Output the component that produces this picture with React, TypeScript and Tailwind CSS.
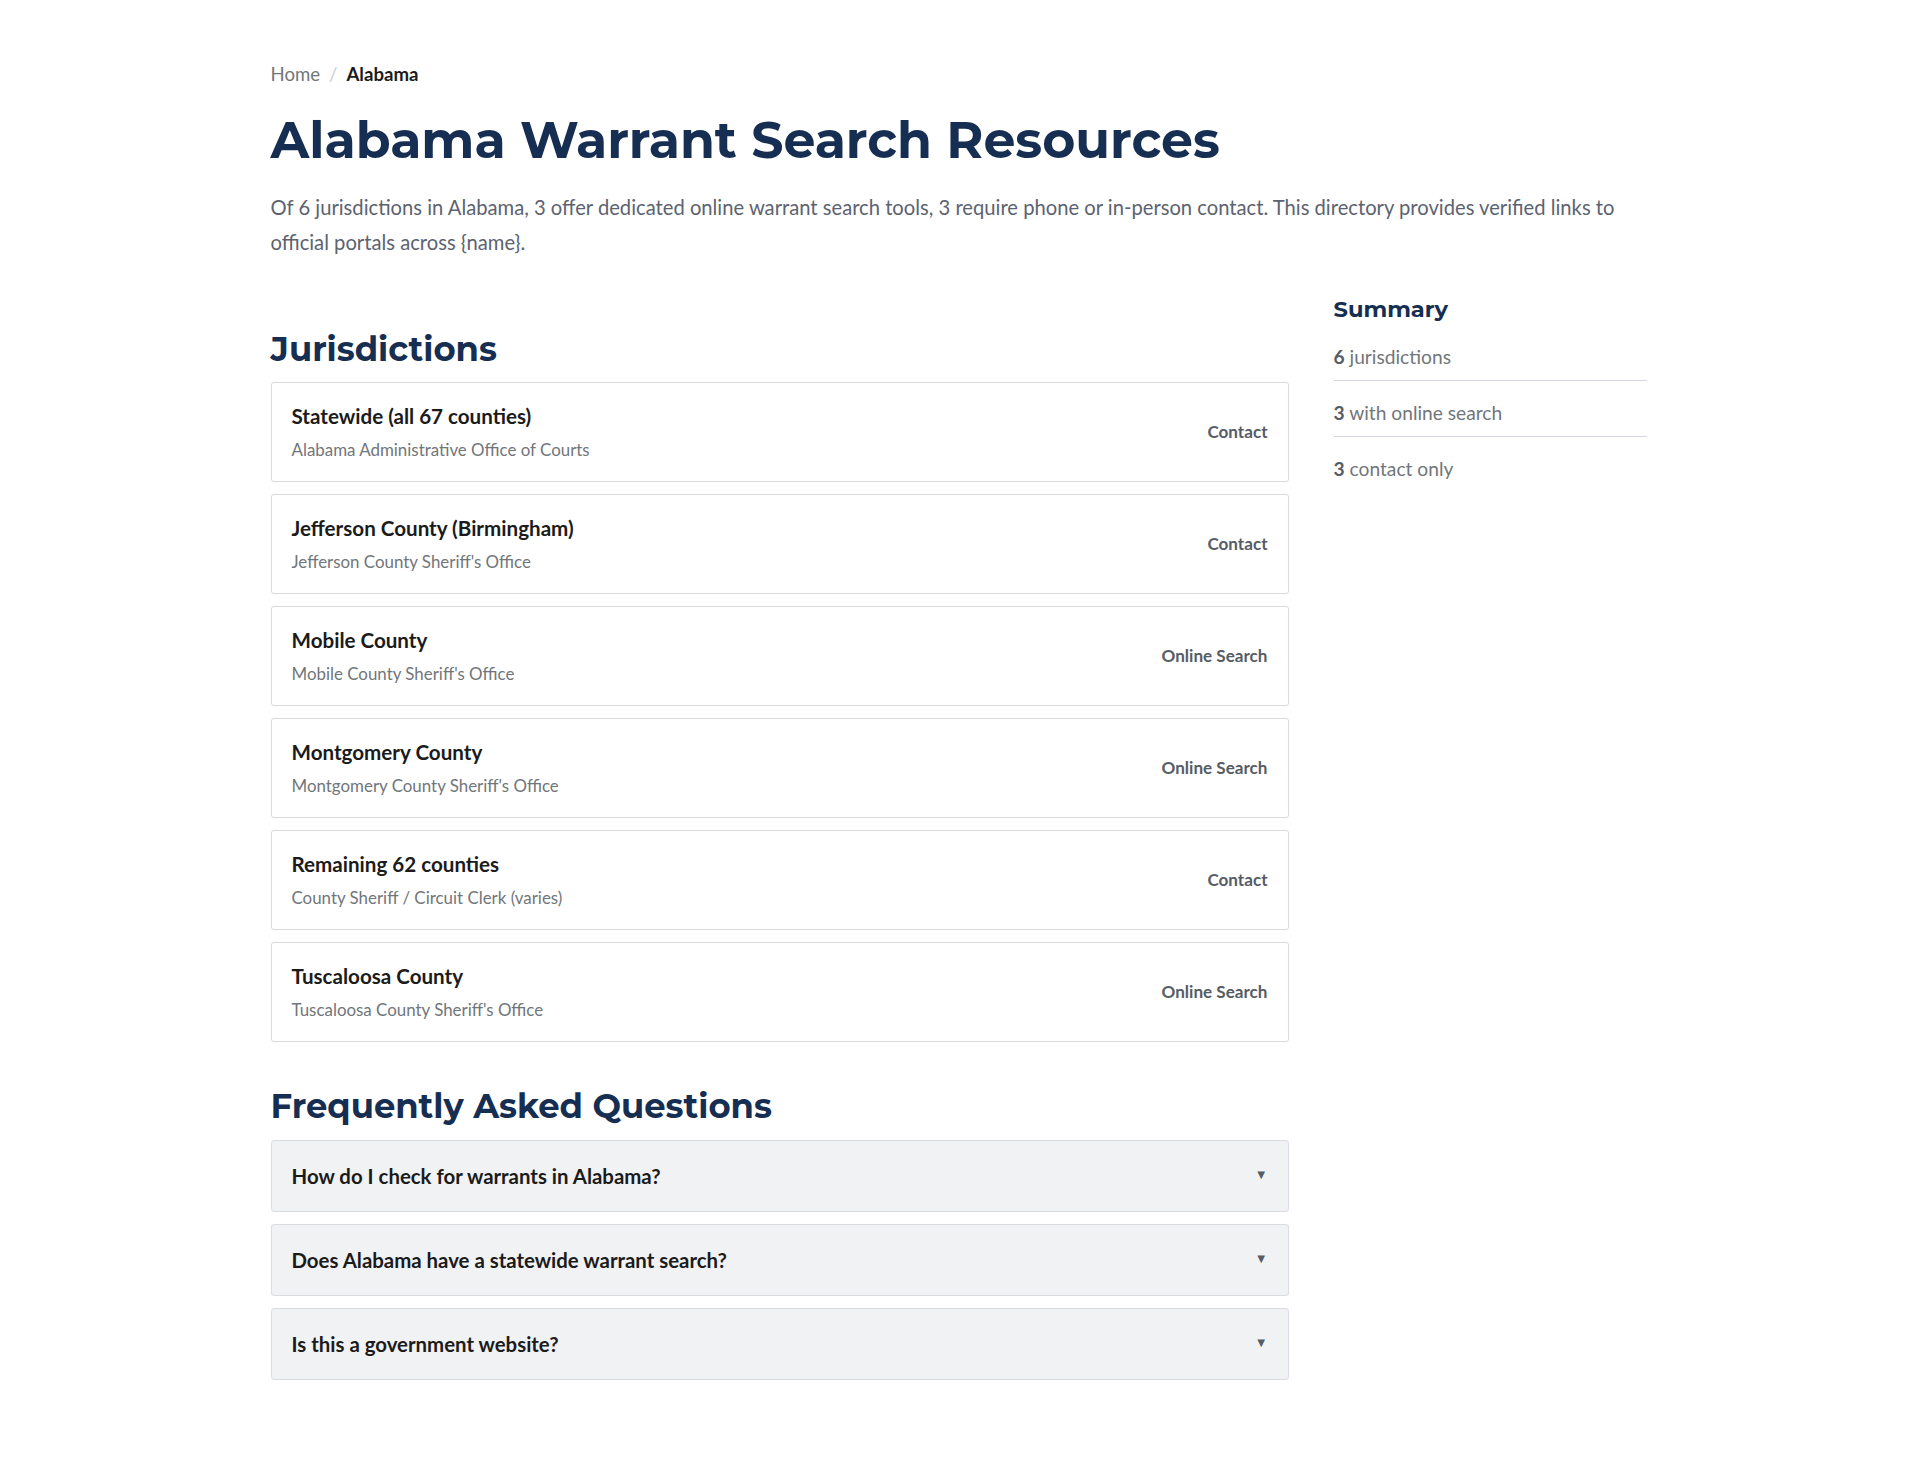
import React from "react";

const jurisdictions = [
  { name: "Statewide (all 67 counties)", office: "Alabama Administrative Office of Courts", type: "Contact" },
  { name: "Jefferson County (Birmingham)", office: "Jefferson County Sheriff's Office", type: "Contact" },
  { name: "Mobile County", office: "Mobile County Sheriff's Office", type: "Online Search" },
  { name: "Montgomery County", office: "Montgomery County Sheriff's Office", type: "Online Search" },
  { name: "Remaining 62 counties", office: "County Sheriff / Circuit Clerk (varies)", type: "Contact" },
  { name: "Tuscaloosa County", office: "Tuscaloosa County Sheriff's Office", type: "Online Search" },
];

const faqs = [
  "How do I check for warrants in Alabama?",
  "Does Alabama have a statewide warrant search?",
  "Is this a government website?",
];

const body = { fontFamily: '"Source Sans Pro", Lato, "Liberation Sans", sans-serif' };
const head = { fontFamily: 'Montserrat, Inter, "Liberation Sans", sans-serif' };

export default function App() {
  return (
    <div className="min-h-[1462px] bg-white text-[#1b1b1b]" style={body}>
      <div className="mx-auto max-w-[1376px] pt-[61px] pb-20">
        <nav className="flex items-center text-[18.6px] leading-[26px]">
          <span className="text-[#71767a]">Home</span>
          <span className="mx-[9px] text-[#c9cdd2]">/</span>
          <span className="font-bold text-[#1b1b1b]">Alabama</span>
        </nav>
        <h1 className="mt-[23px] text-[50.6px] font-bold leading-[60px] text-[#162e51]" style={head}>
          Alabama Warrant Search Resources
        </h1>
        <p className="mt-[20px] text-[20.2px] leading-[35px] text-[#5c6370]">
          Of 6 jurisdictions in Alabama, 3 offer dedicated online warrant search tools, 3 require phone or in-person contact. This directory provides verified links to official portals across {"{name}"}.
        </p>

        <div className="mt-[35px] grid grid-cols-[1fr_313px] gap-[45px]">
          <main>
            <h2 className="mt-[34px] text-[33.8px] font-bold leading-10 text-[#162e51]" style={head}>
              Jurisdictions
            </h2>
            <div className="mt-[13px] flex flex-col gap-3">
              {jurisdictions.map((j) => (
                <div
                  key={j.name}
                  className="flex items-center justify-between rounded-[3px] border border-[#d9dce1] bg-white px-5 pt-[19px] pb-[19px]"
                >
                  <div>
                    <div className="text-[20.6px] font-bold leading-7 text-[#1b1b1b]">{j.name}</div>
                    <div className="mt-2 text-[16.9px] leading-6 text-[#71767a]">{j.office}</div>
                  </div>
                  <div className="text-[17.1px] font-bold text-[#565c65]">{j.type}</div>
                </div>
              ))}
            </div>

            <h2 className="mt-[44px] text-[33.8px] font-bold leading-10 text-[#162e51]" style={head}>
              Frequently Asked Questions
            </h2>
            <div className="mt-[14px] flex flex-col gap-3">
              {faqs.map((q) => (
                <div
                  key={q}
                  className="flex items-center justify-between rounded-[3px] border border-[#d9dce1] bg-[#f1f2f4] px-5 py-5"
                >
                  <span className="text-[20.4px] font-bold leading-[30px] text-[#1b1b1b]">{q}</span>
                  <span className="-translate-y-[2px] text-[13px] leading-none text-[#565c65]">▼</span>
                </div>
              ))}
            </div>
          </main>

          <aside>
            <h3 className="text-[22.6px] font-bold leading-7 text-[#162e51]" style={head}>
              Summary
            </h3>
            <ul className="mt-[2px] text-[19.2px] text-[#71767a]">
              <li className="border-b border-[#d3d6dd] pt-[18px] pb-[9px] leading-7">
                <span className="font-bold text-[#565c65]">6</span> jurisdictions
              </li>
              <li className="border-b border-[#d3d6dd] pt-[18px] pb-[9px] leading-7">
                <span className="font-bold text-[#565c65]">3</span> with online search
              </li>
              <li className="pt-[18px] pb-[9px] leading-7">
                <span className="font-bold text-[#565c65]">3</span> contact only
              </li>
            </ul>
          </aside>
        </div>
      </div>
    </div>
  );
}
